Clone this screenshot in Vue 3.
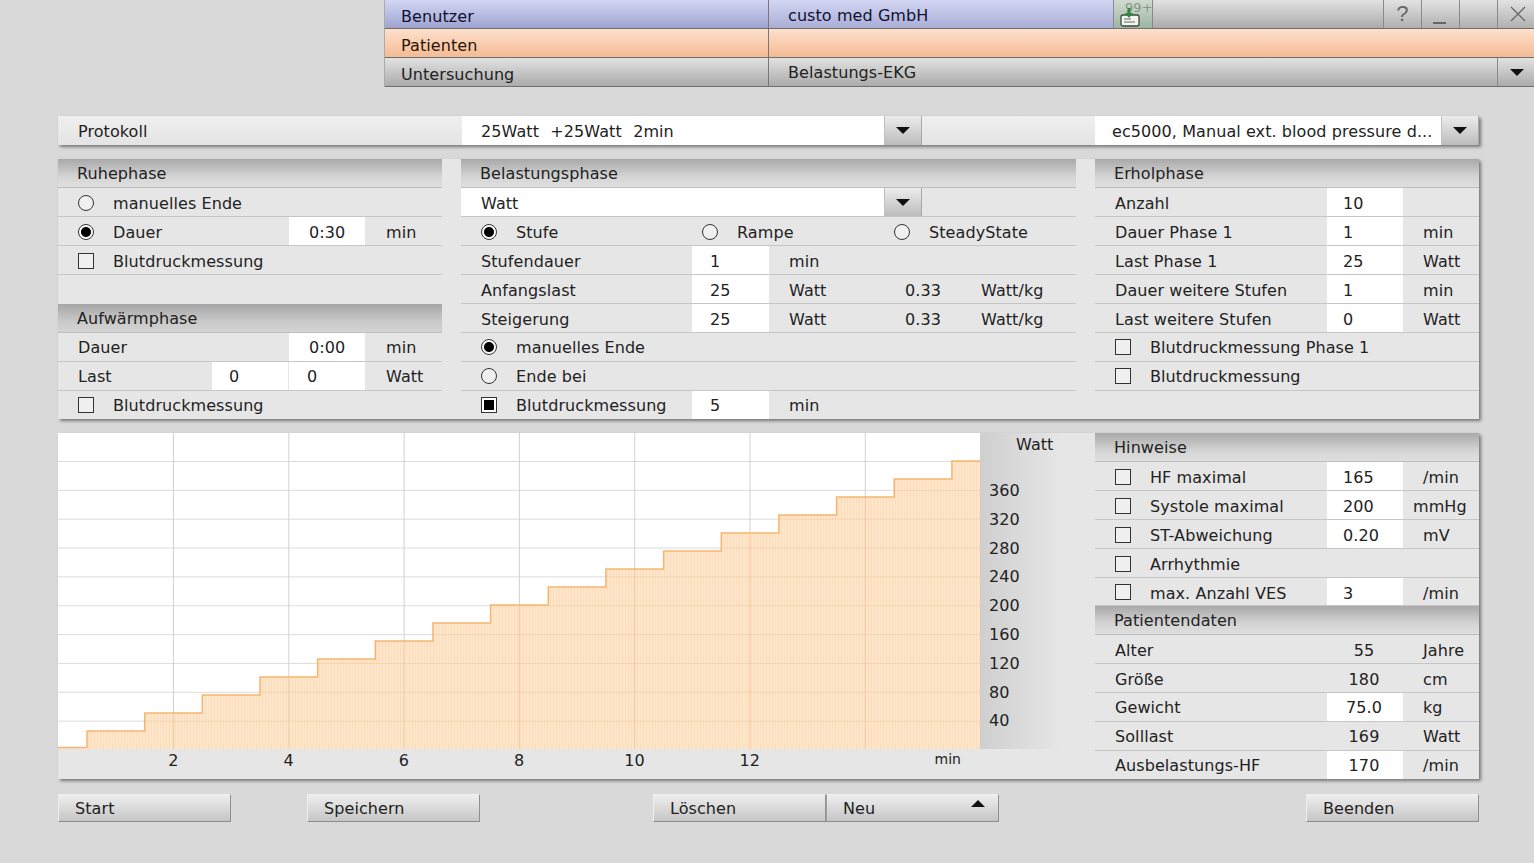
<script setup>
const lab = (x, w = '') => ({ k: 'lab', x, w })
const pick = (m, x, w = '') => ({ k: 'pick', m, x, w })
const fld = (x, w = 'w76', p = '') => ({ k: 'field', x, w, p })
const txt = (x, w = '', p = '') => ({ k: 'txt', x, w, p })

const ruhe = [
  [pick('radio', 'manuelles Ende')],
  [pick('radio-on', 'Dauer', 'w231'), fld('0:30', 'w76', 'p20'), txt('min', 'w77', 'p21')],
  [pick('check', 'Blutdruckmessung')]
]
const warm = [
  [lab('Dauer', 'w231'), fld('0:00', 'w76', 'p20'), txt('min', 'w77', 'p21')],
  [lab('Last', 'w154'), fld('0', 'w76', 'p17'), txt('', 'w1'), fld('0', 'w76', 'p18'), txt('Watt', 'w77', 'p21')],
  [pick('check', 'Blutdruckmessung')]
]
const belastTop = [
  [lab('Stufendauer', 'w231'), fld('1', 'w77'), txt('min', 'w136', 'p20')],
  [lab('Anfangslast', 'w231'), fld('25', 'w77'), txt('Watt', 'w136', 'p20'), txt('0.33', 'w76'), txt('Watt/kg')],
  [lab('Steigerung', 'w231'), fld('25', 'w77'), txt('Watt', 'w136', 'p20'), txt('0.33', 'w76'), txt('Watt/kg')],
  [pick('radio-on', 'manuelles Ende')],
  [pick('radio', 'Ende bei')],
  [pick('square', 'Blutdruckmessung', 'w231'), fld('5', 'w77'), txt('min', 'w136', 'p20')]
]
const erhol = [
  [lab('Anzahl', 'w232'), fld('10', 'w76', 'p16')],
  [lab('Dauer Phase 1', 'w232'), fld('1', 'w76', 'p16'), txt('min', 'w76', 'p20')],
  [lab('Last Phase 1', 'w232'), fld('25', 'w76', 'p16'), txt('Watt', 'w76', 'p20')],
  [lab('Dauer weitere Stufen', 'w232'), fld('1', 'w76', 'p16'), txt('min', 'w76', 'p20')],
  [lab('Last weitere Stufen', 'w232'), fld('0', 'w76', 'p16'), txt('Watt', 'w76', 'p20')],
  [pick('check', 'Blutdruckmessung Phase 1')],
  [pick('check', 'Blutdruckmessung')]
]
const hinweise = [
  [pick('check', 'HF maximal', 'w232'), fld('165', 'w76', 'p16'), txt('/min', 'w76', 'p20')],
  [pick('check', 'Systole maximal', 'w232'), fld('200', 'w76', 'p16'), txt('mmHg', 'w76', 'p10')],
  [pick('check', 'ST-Abweichung', 'w232'), fld('0.20', 'w76', 'p16'), txt('mV', 'w76', 'p20')],
  [pick('check', 'Arrhythmie')],
  [pick('check', 'max. Anzahl VES', 'w232'), fld('3', 'w76', 'p16'), txt('/min', 'w76', 'p20')]
]
const patient = [
  [lab('Alter', 'w232'), txt('55', 'w76', 'mid'), txt('Jahre', 'w76', 'p20')],
  [lab('Größe', 'w232'), txt('180', 'w76', 'mid'), txt('cm', 'w76', 'p20')],
  [lab('Gewicht', 'w232'), fld('75.0', 'w76', 'mid'), txt('kg', 'w76', 'p20')],
  [lab('Solllast', 'w232'), txt('169', 'w76', 'mid'), txt('Watt', 'w76', 'p20')],
  [lab('Ausbelastungs-HF', 'w232'), fld('170', 'w76', 'mid'), txt('/min', 'w76', 'p20')]
]

const hLines = Array.from({ length: 10 }, (_, i) => 28.5 + i * 28.85)
const vLines = Array.from({ length: 7 }, (_, i) => 115.5 + i * 115.3)
const stepPath = (() => {
  let d = 'M0 314.5 H29'
  for (let i = 0; i < 16; i++) {
    const y = 298 - i * 18
    const nx = i === 15 ? 922 : 29 + (i + 1) * 57.66
    d += ` V${y} H${nx.toFixed(1)}`
  }
  return d
})()
const areaPath = stepPath + ' V316 H0 Z'
const yLabels = [360, 320, 280, 240, 200, 160, 120, 80, 40]
const xLabels = [2, 4, 6, 8, 10, 12]
</script>

<template>
  <div class="page">
    <header class="head">
      <div class="hrow blue">
        <div class="hname">Benutzer</div>
        <div class="hval">custo med GmbH</div>
        <div class="mail">
          <span class="count">99+</span>
          <svg class="mailicon" width="24" height="22" viewBox="0 0 24 22">
            <rect x="2" y="10" width="18" height="11" rx="2" fill="#f4f4ee" stroke="#3c4a3c" stroke-width="1.3" />
            <path d="M5 14h7M5 17h11" stroke="#666" stroke-width="1.2" />
            <path d="M8.5 3h3v5h2.5l-4 5-4-5h2.5z" fill="#2c8a3c" />
          </svg>
        </div>
        <div class="hspace"></div>
        <div class="wbtn"><span class="q">?</span></div>
        <div class="wbtn"><span class="minus"></span></div>
        <div class="wbtn"></div>
        <div class="wbtn last">
          <svg class="close" width="16" height="16" viewBox="0 0 16 16"><path d="M1 1l14 14M15 1L1 15" stroke="#666" stroke-width="1.3" /></svg>
        </div>
      </div>
      <div class="hrow orange">
        <div class="hname">Patienten</div>
        <div class="hval"></div>
      </div>
      <div class="hrow grey">
        <div class="hname">Untersuchung</div>
        <div class="hval">Belastungs-EKG</div>
        <div class="hdrop"><span class="arrow"></span></div>
      </div>
    </header>

    <div class="bar">
      <div class="barlabel">Protokoll</div>
      <div class="select s422">25Watt&nbsp; +25Watt&nbsp; 2min</div>
      <div class="drop"><span class="arrow"></span></div>
      <div class="barfill"></div>
      <div class="select s346">ec5000, Manual ext. blood pressure d...</div>
      <div class="drop"><span class="arrow"></span></div>
    </div>

    <section class="panel upper">
      <div class="col side">
        <div class="sect">Ruhephase</div>
        <div v-for="(r, i) in ruhe" :key="i" class="row">
          <template v-for="(c, j) in r" :key="j">
            <div v-if="c.k === 'pick'" class="pick" :class="c.w"><span class="mark" :class="c.m"></span>{{ c.x }}</div>
            <div v-else :class="[c.k, c.w, c.p]">{{ c.x }}</div>
          </template>
        </div>
        <div class="blank"></div>
        <div class="sect dark">Aufwärmphase</div>
        <div v-for="(r, i) in warm" :key="i" class="row lift" :class="{ end: i === 2 }">
          <template v-for="(c, j) in r" :key="j">
            <div v-if="c.k === 'pick'" class="pick" :class="c.w"><span class="mark" :class="c.m"></span>{{ c.x }}</div>
            <div v-else :class="[c.k, c.w, c.p]">{{ c.x }}</div>
          </template>
        </div>
      </div>

      <div class="col centre">
        <div class="sect">Belastungsphase</div>
        <div class="row">
          <div class="select s423">Watt</div>
          <div class="drop"><span class="arrow"></span></div>
        </div>
        <div class="row">
          <div class="pick w241"><span class="mark radio-on"></span>Stufe</div>
          <div class="pick w192 flush"><span class="mark radio"></span>Rampe</div>
          <div class="pick flush"><span class="mark radio"></span>SteadyState</div>
        </div>
        <div v-for="(r, i) in belastTop" :key="i" class="row" :class="{ end: i === 5, lift: i >= 3 }">
          <template v-for="(c, j) in r" :key="j">
            <div v-if="c.k === 'pick'" class="pick" :class="c.w"><span class="mark" :class="c.m"></span>{{ c.x }}</div>
            <div v-else :class="[c.k, c.w, c.p]">{{ c.x }}</div>
          </template>
        </div>
      </div>

      <div class="col side">
        <div class="sect">Erholphase</div>
        <div v-for="(r, i) in erhol" :key="i" class="row" :class="{ lift: i >= 5 }">
          <template v-for="(c, j) in r" :key="j">
            <div v-if="c.k === 'pick'" class="pick" :class="c.w"><span class="mark" :class="c.m"></span>{{ c.x }}</div>
            <div v-else :class="[c.k, c.w, c.p]">{{ c.x }}</div>
          </template>
        </div>
      </div>
    </section>

    <section class="panel lower">
      <div class="chartwrap">
        <div class="plotrow">
          <svg class="plot" width="922" height="316" viewBox="0 0 922 316">
            <defs>
              <pattern id="stripes" width="3" height="4" patternUnits="userSpaceOnUse">
                <rect width="3" height="4" fill="#fee6cb" />
                <rect width="1" height="4" fill="#fcdcba" />
              </pattern>
              <clipPath id="under"><path :d="areaPath" /></clipPath>
            </defs>
            <rect width="922" height="316" fill="#fff" />
            <line v-for="y in hLines" :key="y" x1="0" x2="922" :y1="y" :y2="y" stroke="#dcdcdc" />
            <line v-for="x in vLines" :key="x" :x1="x" :x2="x" y1="0" y2="316" stroke="#d2d2d2" />
            <path :d="areaPath" fill="url(#stripes)" />
            <g clip-path="url(#under)">
              <line v-for="y in hLines" :key="y" x1="0" x2="922" :y1="y" :y2="y" stroke="#e6b888" stroke-opacity=".35" />
              <line v-for="x in vLines" :key="x" :x1="x" :x2="x" y1="0" y2="316" stroke="#dfae7a" stroke-opacity=".45" />
            </g>
            <path :d="stepPath" fill="none" stroke="#f6b56f" stroke-width="1.5" />
          </svg>
          <div class="yaxis">
            <div class="ytitle">Watt</div>
            <div v-for="v in yLabels" :key="v" class="ytick">{{ v }}</div>
          </div>
        </div>
        <div class="xaxis">
          <div v-for="v in xLabels" :key="v" class="xtick">{{ v }}</div>
          <div class="xunit">min</div>
        </div>
      </div>

      <div class="col side">
        <div class="sect">Hinweise</div>
        <div v-for="(r, i) in hinweise" :key="i" class="row" :class="{ short: i === 4 }">
          <template v-for="(c, j) in r" :key="j">
            <div v-if="c.k === 'pick'" class="pick" :class="c.w"><span class="mark" :class="c.m"></span>{{ c.x }}</div>
            <div v-else :class="[c.k, c.w, c.p]">{{ c.x }}</div>
          </template>
        </div>
        <div class="sect">Patientendaten</div>
        <div v-for="(r, i) in patient" :key="i" class="row" :class="{ end: i === 4, lift: i >= 2 }">
          <div v-for="(c, j) in r" :key="j" :class="[c.k, c.w, c.p]">{{ c.x }}</div>
        </div>
      </div>
    </section>

    <footer class="actions">
      <button class="btn">Start</button>
      <button class="btn m76">Speichern</button>
      <button class="btn m173">Löschen</button>
      <button class="btn neu">Neu<span class="arrow up"></span></button>
      <button class="btn m307">Beenden</button>
    </footer>
  </div>
</template>

<style scoped>
.page {
  width: 1534px;
  height: 863px;
  box-sizing: border-box;
  padding-left: 58px;
  background: #d9d9d9;
  font-family: "DejaVu Sans", Verdana, sans-serif;
  font-size: 16px;
  letter-spacing: .08px;
  color: #222;
  overflow: hidden;
}
.head { margin-left: 326px; width: 1150px; margin-bottom: 29px; border-left: 1px solid #aaa; box-sizing: border-box; }
.hrow { display: flex; height: 29px; box-sizing: border-box; border-bottom: 1px solid #6f6f6f; }
.blue { background: linear-gradient(#d3d6f3, #9ea4d0); color: #111133; }
.orange { background: linear-gradient(#fde0cc, #f5bb94); color: #2a1408; }
.grey { background: linear-gradient(#e2e2e2, #ababab); }
.hname { width: 383px; box-sizing: border-box; padding-left: 16px; line-height: 33px; }
.hval { padding-left: 19px; border-left: 1px solid #777; width: 345px; box-sizing: border-box; flex: none; line-height: 32px; }
.grey .hval { line-height: 30px; }
.orange .hval, .grey .hval { flex: 1; }
.blue .hval { background: linear-gradient(#d3d6f3, #a9aed6); }
.mail { position: relative; width: 40px; background: linear-gradient(#cfdccf, #9db5a2); border-left: 1px solid #889; border-right: 1px solid #888; box-sizing: border-box; }
.count { position: absolute; left: 11px; top: -3px; color: #8a948a; font-size: 13px; line-height: 22px; }
.mailicon { position: absolute; left: 5px; top: 5px; }
.hspace { flex: 1; background: linear-gradient(#e2e2e2, #ababab); }
.wbtn { width: 38px; box-sizing: border-box; border-left: 1px solid #8a8a8a; background: linear-gradient(#e2e2e2, #b0b0b0); display: flex; align-items: center; justify-content: center; color: #666; }
.wbtn.last { width: 37px; }
.close { margin-left: 4px; }
.q { font-size: 22px; color: #666; font-family: "Liberation Sans", sans-serif; }
.minus { width: 13px; height: 2px; background: #666; margin: 17px 3px 0 0; }
.hdrop { width: 37px; border-left: 1px solid #8a8a8a; box-sizing: border-box; display: flex; align-items: center; justify-content: center; padding-left: 2px; }

.arrow { width: 0; height: 0; border-left: 7px solid transparent; border-right: 7px solid transparent; border-top: 7px solid #111; }
.arrow.up { border-top: 0; border-bottom: 7px solid #111; position: absolute; right: 13px; top: 5px; }

.bar { display: flex; width: 1421px; height: 29px; margin-bottom: 14px; box-shadow: 2px 2px 3px rgba(0,0,0,.45); background: linear-gradient(#efefef, #e4e4e4); }
.barlabel { width: 404px; box-sizing: border-box; padding-left: 20px; line-height: 32px; }
.select { background: #fff; box-sizing: border-box; padding-left: 19px; line-height: 31px; }
.s422 { width: 422px; word-spacing: .5px; }
.s423 { width: 423px; padding-left: 20px; }
.s346 { width: 346px; padding-left: 17px; }
.drop { width: 38px; flex: none; box-sizing: border-box; background: linear-gradient(#ececec, #bcbcbc); border-left: 1px solid #c0c0c0; border-right: 1px solid #a8a8a8; display: flex; align-items: center; justify-content: center; }
.barfill { width: 173px; }

.panel { display: flex; gap: 19px; width: 1421px; background: #e6e6e6; box-shadow: 2px 2px 3px rgba(0,0,0,.45); }
.upper { height: 260px; margin-bottom: 14px; }
.lower { height: 346px; margin-bottom: 15px; }
.col { display: flex; flex-direction: column; }
.side { width: 384px; }
.centre { width: 615px; }

.sect { height: 29px; flex: none; box-sizing: border-box; padding-left: 19px; line-height: 30px; background: linear-gradient(#a9a9a9, #d5d5d5 65%, #dfdfdf); border-bottom: 1px solid #bdbdbd; }
.sect.dark { background: linear-gradient(#a6a6a6, #c8c8c8 60%, #d4d4d4); }
.blank { height: 29px; flex: none; }
.row { display: flex; height: 29px; flex: none; box-sizing: border-box; border-bottom: 1px solid #c6c6c6; line-height: 32px; }
.row.short { height: 28px; }
.row.end { border-bottom-color: transparent; }
.row.lift { line-height: 30px; }
.lab { box-sizing: border-box; padding-left: 20px; }
.pick { box-sizing: border-box; display: flex; align-items: center; gap: 19px; padding: 4px 0 0 20px; line-height: 28px; }
.lift .pick { padding-top: 2px; }
.pick.flush { padding-left: 0; }
.field { background: #fff; box-sizing: border-box; padding-left: 18px; }
.txt { box-sizing: border-box; }
.mid { padding: 0 2px 0 0; text-align: center; }
.p10 { padding-left: 10px; }
.p16 { padding-left: 16px; }
.p17 { padding-left: 17px; }
.p18 { padding-left: 18px; }
.p20 { padding-left: 20px; }
.p21 { padding-left: 21px; }
.w1 { width: 1px; }
.w76 { width: 76px; }
.w77 { width: 77px; }
.w136 { width: 136px; }
.w154 { width: 154px; }
.w192 { width: 192px; }
.w231 { width: 231px; }
.w232 { width: 232px; }
.w241 { width: 241px; }

.mark { width: 16px; height: 16px; flex: none; box-sizing: border-box; border: 1px solid #333; background: #f0f0f0; margin-top: -3px; }
.radio, .radio-on { border-radius: 50%; }
.radio-on { background: radial-gradient(circle, #000 0 4.5px, #fff 5.5px); }
.square { background: #fff; box-shadow: inset 0 0 0 2px #fff, inset 0 0 0 7px #000; }

.chartwrap { width: 1018px; display: flex; flex-direction: column; }
.plotrow { display: flex; height: 316px; }
.plot { display: block; flex: none; }
.yaxis { flex: 1; background: linear-gradient(90deg, #cfcfcf, #e6e6e6 85%); }
.ytitle { height: 29px; padding-left: 36px; line-height: 24px; margin-bottom: 15px; }
.ytick { height: 28.8px; line-height: 28.8px; padding-left: 9px; }
.xaxis { display: flex; padding-left: 57.65px; height: 30px; line-height: 24px; }
.xtick { width: 115.3px; text-align: center; }
.xunit { font-size: 14px; margin-left: 127px; line-height: 20px; }

.actions { display: flex; height: 28px; }
.btn { position: relative; width: 173px; height: 28px; flex: none; box-sizing: border-box; padding: 1px 0 0 16px; border: 0; border-right: 1px solid #909090; border-bottom: 1px solid #8c8c8c; border-top: 1px solid #efefef; border-left: 1px solid #efefef; background: linear-gradient(#eeeeee, #c6c6c6); color: #222; font: inherit; letter-spacing: inherit; text-align: left; }
.m76 { margin-left: 76px; }
.m173 { margin-left: 173px; }
.m307 { margin-left: 307px; }
.neu { border-left-color: #a0a0a0; }
</style>

<style>
html, body { margin: 0; background: #d9d9d9; }
</style>
